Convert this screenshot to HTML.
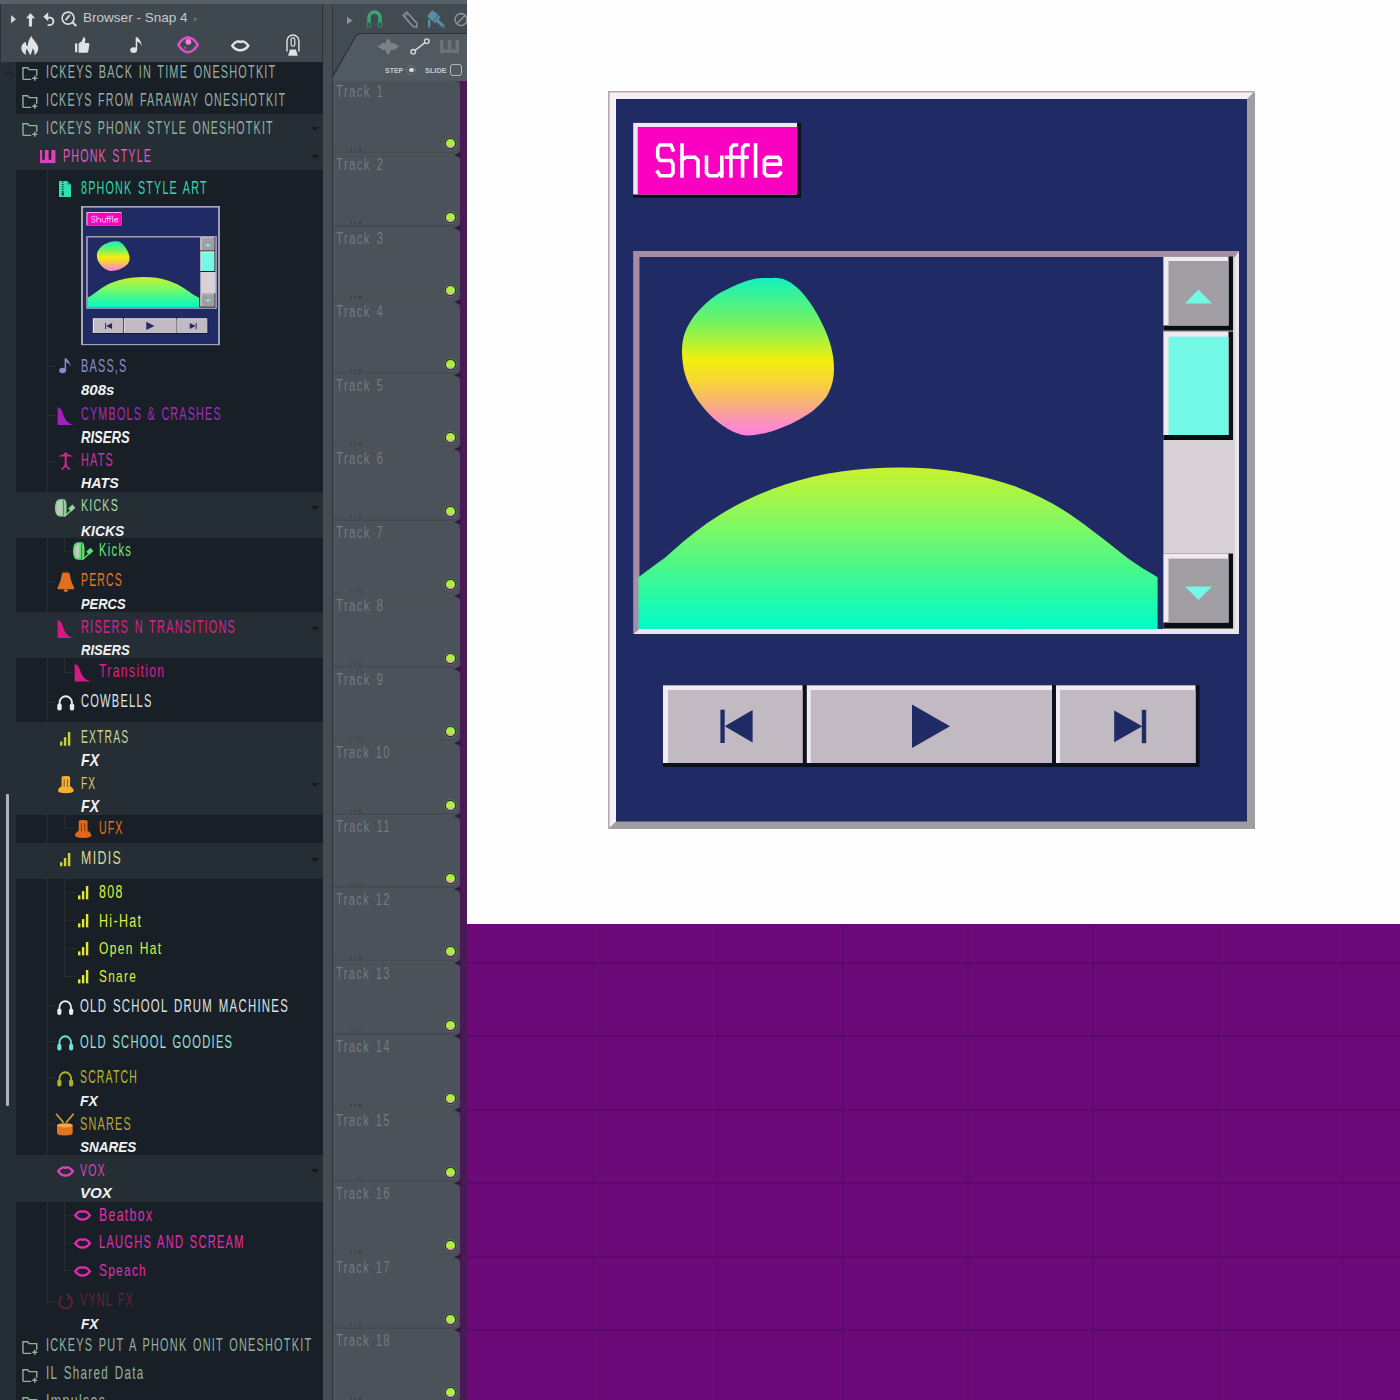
<!DOCTYPE html>
<html><head><meta charset="utf-8">
<style>
html,body{margin:0;padding:0;width:1400px;height:1400px;overflow:hidden;background:#fdfdfd;font-family:"Liberation Sans",sans-serif}
.r{position:absolute}
.t{position:absolute;white-space:nowrap;font-family:"Liberation Sans",sans-serif;transform-origin:0 0}
.trk{position:absolute;left:333px;width:127px;background:#4b5259;border-radius:0 7px 7px 0}
.dot{position:absolute;left:445px;width:9px;height:9px;border-radius:50%;background:linear-gradient(#a4ee3c 0,#b0f040 68%,#d8b898 76%,#d8b898 100%);border:1.5px solid #262c30;box-shadow:0 0 0 1px #5e656b;box-sizing:content-box}
.ic{position:absolute;overflow:visible}
.dd{position:absolute;left:311px;width:0;height:0;border-left:4px solid transparent;border-right:4px solid transparent;border-top:4px solid #15191d}
</style></head><body>
<svg width="0" height="0" style="position:absolute">
<defs>
<linearGradient id="gblob" x1="0" y1="0" x2="0" y2="1">
<stop offset="0" stop-color="#14f2bc"/><stop offset="0.28" stop-color="#72f262"/><stop offset="0.42" stop-color="#b8f232"/>
<stop offset="0.52" stop-color="#f0f00e"/><stop offset="0.66" stop-color="#f8d438"/><stop offset="0.8" stop-color="#f8b078"/>
<stop offset="0.9" stop-color="#fc94b8"/><stop offset="1" stop-color="#fc80e0"/>
</linearGradient>
<linearGradient id="ghill" x1="0" y1="0" x2="0" y2="1">
<stop offset="0" stop-color="#c8f22e"/><stop offset="0.3" stop-color="#8cf85a"/><stop offset="0.62" stop-color="#48f88a"/><stop offset="1" stop-color="#00fcc8"/>
</linearGradient>
<symbol id="art" viewBox="608 91 647 738" preserveAspectRatio="none">
<rect x="608" y="91" width="647" height="738" fill="#a09ea0"/>
<polygon points="608,91 1255,91 1247,99 616,99 616,821.5 608,829" fill="#f4f0f4"/><path d="M608.8,829 L608.8,91.8 L1254,91.8" fill="none" stroke="#b4a8b4" stroke-width="1.6"/>
<rect x="616" y="99" width="631" height="722.5" fill="#202b66"/>
<rect x="633.2" y="122.9" width="167.8" height="74.8" fill="#0a0e18"/>
<rect x="633.2" y="122.9" width="163.9" height="71.6" fill="#f0e8f0"/>
<rect x="637.7" y="127" width="159.4" height="67.5" fill="#fa00c0"/>
<g stroke="#ffffff" stroke-width="3.6" fill="none" stroke-linecap="square" stroke-linejoin="miter">
<path d="M673,150 L671,145 L660,145 L657.7,148 L657.7,157 L660,160.5 L671,160.5 L673,164 L673,173 L671,175.8 L660,175.8 L657.7,172"/>
<path d="M682,145 L682,176 M682,160 L686,157.3 L695,157.3 L698,160.5 L698,176"/>
<path d="M706.5,157.3 L706.5,173 L709,175.8 L717,175.8 L721.8,172 M721.8,157.3 L721.8,176"/>
<path d="M730.9,176 L730.9,148 L733.5,145 L736.5,145 M726.5,157.3 L735.5,157.3"/>
<path d="M742.6,176 L742.6,148 L745.2,145 L748,145 M738.5,157.3 L747,157.3"/>
<path d="M755.6,145 L755.6,176"/>
<path d="M780.3,173 L778,175.8 L767,175.8 L764.4,173 L764.4,160 L767,157.3 L778,157.3 L780.3,160 L780.3,164.3 L765,164.3"/>
</g>
<rect x="633.6" y="251" width="605.4" height="383" fill="#ece6ec"/>
<polygon points="633.6,251 1239,251 1235,257 639.3,257 639.3,629 633.6,634" fill="#a68ca4"/>
<rect x="639.3" y="257" width="595.7" height="372" fill="#202b66"/>
<path fill="url(#gblob)" d="M762.1,277.9 C752,278.5 745,281 737.1,284.6 C729,288.5 722,291.5 715.7,295.4 C708,301 703,306 697.9,311.4 C693,317 690,322 687.1,327.5 C684,334 682.6,340 682.1,347.1 C681.6,354 682.5,361 683.6,368.6 C685,376 687.5,382 690.7,388.2 C694.5,396 699.5,403 705,409.6 C710.5,416 716,421 722.9,425.7 C729.5,430 736.5,434 744.3,435.2 C751.5,436 758.5,434.6 765.7,432.9 C774.5,430.6 782.5,427.5 790.7,423.9 C798.5,420 805.5,416 812.1,411.4 C818,406.5 822.8,402 826.4,397.1 C830.5,390 832.8,383 833.6,375.7 C834.4,368.5 833.8,361 832.7,354.3 C831.5,347 829.3,340 826.4,332.9 C823.4,325.5 819.8,318.5 815.7,311.4 C811.3,304 806.6,297.5 801.4,291.8 C797,287 792.3,283.2 787.1,280.7 C782.5,278.6 777.5,277.7 772.9,277.9 Z"/>
<path fill="url(#ghill)" d="M638.5,577.3 C648,570 656,564 664.7,558 C678,546 692,534 707,523.3 C732,506 757,494 784.3,484.7 C822,472 860,467.4 900,467.4 C940,467.4 978,473 1015.7,486.6 C1044,497 1069,512 1092.8,531 C1105,540 1116,549 1127.5,558 C1137,565 1147,571 1157.6,577.3 L1157.6,629 L638.5,629 Z"/>
<rect x="1163.4" y="257" width="71.6" height="372" fill="#d8d2d8"/>
<rect x="1163.4" y="256.5" width="69.6" height="74.1" fill="#0a0e14"/>
<rect x="1163.4" y="256.5" width="65.1" height="69" fill="#f0eaf0"/>
<rect x="1168.5" y="261" width="60" height="64.5" fill="#a09ea2"/>
<polygon points="1185,303.6 1198.5,289.5 1212,303.6" fill="#72f8e4"/>
<rect x="1163.4" y="331.5" width="69.6" height="108.5" fill="#0a0e14"/>
<rect x="1163.4" y="331.5" width="65.1" height="103.5" fill="#f0eaf0"/>
<rect x="1168.5" y="336.6" width="60" height="98.4" fill="#72f8e4"/>
<rect x="1163.4" y="553.5" width="69.6" height="75" fill="#0a0e14"/>
<rect x="1163.4" y="553.5" width="65.1" height="69" fill="#f0eaf0"/>
<rect x="1168.5" y="558.6" width="60" height="63.9" fill="#a09ea2"/>
<polygon points="1185,586.5 1212,586.5 1198.5,600" fill="#72f8e4"/>
<rect x="663" y="685.3" width="393" height="81.7" fill="#0c1018"/>
<rect x="663" y="685.3" width="139.5" height="77.7" fill="#f2ecf2"/>
<rect x="668" y="690" width="134.5" height="73" fill="#c2bac2"/>
<rect x="806.8" y="685.3" width="245.2" height="77.7" fill="#f2ecf2"/>
<rect x="810.8" y="690" width="241.2" height="73" fill="#c2bac2"/>
<rect x="1056" y="685.3" width="143.6" height="81.7" fill="#0c1018"/>
<rect x="1056" y="685.3" width="139.5" height="77.7" fill="#f2ecf2"/>
<rect x="1060" y="690" width="135.5" height="73" fill="#c2bac2"/>
<rect x="720.4" y="709.7" width="4.3" height="33.3" fill="#202b66"/>
<polygon points="752.6,710 724.7,726.3 752.6,742.5" fill="#202b66"/>
<polygon points="912,704.4 950,726.2 912,748" fill="#202b66"/>
<polygon points="1114.2,710.4 1142.3,726.3 1114.2,742.2" fill="#202b66"/>
<rect x="1141.8" y="709.8" width="4.4" height="33.4" fill="#202b66"/>
</symbol>
</defs>
</svg>

<!-- left dark app area -->
<div class="r" style="left:0;top:0;width:467px;height:1400px;background:#262e35"></div>
<div class="r" style="left:0;top:0;width:467px;height:4px;background:#586067"></div>
<div class="r" style="left:0;top:4px;width:323px;height:58px;background:#3f474f"></div>
<div class="r" style="left:0;top:4px;width:1px;height:58px;background:#2a3036"></div>
<!-- gutter -->
<div class="r" style="left:322px;top:4px;width:11px;height:1396px;background:#454d54"></div>
<div class="r" style="left:322px;top:4px;width:1px;height:1396px;background:#2a3035"></div>
<div class="r" style="left:332px;top:4px;width:1px;height:1396px;background:#2f353a"></div>
<!-- track header -->
<div class="r" style="left:333px;top:4px;width:134px;height:77px;background:#434b52"></div>
<svg class="ic" style="left:333px;top:30px" width="134" height="52" viewBox="333 30 134 52">
<path d="M333,81 L333,76 L356,35.5 Q358,33.5 361,33.5 L467,33.5 L467,81 Z" fill="#525a61"/>
<path d="M333,76 L356,35.5 Q358,33.5 361,33.5 L467,33.5" fill="none" stroke="#2a3035" stroke-width="1.2"/>
</svg>
<!-- track column -->
<div class="r" style="left:333px;top:81px;width:127px;height:1319px;background:#3e454c"></div>
<div class="r" style="left:460px;top:81px;width:7px;height:1319px;background:#4a1a58"></div>
<div class="trk" style="top:81.20px;height:73.48px"></div>
<div class="dot" style="top:138.20px"></div>
<div class="r" style="left:350.5px;top:148.80px;width:1.8px;height:1.8px;background:#353b41"></div>
<div class="r" style="left:354.7px;top:148.80px;width:1.8px;height:1.8px;background:#353b41"></div>
<div class="r" style="left:358.9px;top:148.80px;width:1.8px;height:1.8px;background:#353b41"></div>
<div class="r" style="left:333px;top:150.68px;width:121px;height:4px;background:linear-gradient(rgba(40,46,52,0),rgba(40,46,52,.35))"></div>
<div class="t" style="left:336.00px;top:83.92px;font-size:16.86px;line-height:16.86px;letter-spacing:1.85px;word-spacing:2.02px;font-weight:400;font-style:normal;color:#737a81;transform:scaleX(0.6841);">Track 1</div>
<div class="trk" style="top:154.68px;height:73.48px"></div>
<div class="r" style="left:333px;top:153.18px;width:127px;height:1.5px;background:#4c5359"></div>
<div class="dot" style="top:211.68px"></div>
<div class="r" style="left:350.5px;top:222.28px;width:1.8px;height:1.8px;background:#353b41"></div>
<div class="r" style="left:354.7px;top:222.28px;width:1.8px;height:1.8px;background:#353b41"></div>
<div class="r" style="left:358.9px;top:222.28px;width:1.8px;height:1.8px;background:#353b41"></div>
<div class="r" style="left:333px;top:224.16px;width:121px;height:4px;background:linear-gradient(rgba(40,46,52,0),rgba(40,46,52,.35))"></div>
<div class="t" style="left:336.00px;top:157.40px;font-size:16.86px;line-height:16.86px;letter-spacing:1.85px;word-spacing:2.02px;font-weight:400;font-style:normal;color:#737a81;transform:scaleX(0.6841);">Track 2</div>
<div class="r" style="left:454px;top:151.68px;width:0;height:0;border-top:3px solid transparent;border-bottom:3px solid transparent;border-right:7px solid #3a1444"></div>
<div class="trk" style="top:228.16px;height:73.48px"></div>
<div class="r" style="left:333px;top:226.66px;width:127px;height:1.5px;background:#4c5359"></div>
<div class="dot" style="top:285.16px"></div>
<div class="r" style="left:350.5px;top:295.76px;width:1.8px;height:1.8px;background:#353b41"></div>
<div class="r" style="left:354.7px;top:295.76px;width:1.8px;height:1.8px;background:#353b41"></div>
<div class="r" style="left:358.9px;top:295.76px;width:1.8px;height:1.8px;background:#353b41"></div>
<div class="r" style="left:333px;top:297.64px;width:121px;height:4px;background:linear-gradient(rgba(40,46,52,0),rgba(40,46,52,.35))"></div>
<div class="t" style="left:336.00px;top:230.88px;font-size:16.86px;line-height:16.86px;letter-spacing:1.85px;word-spacing:2.02px;font-weight:400;font-style:normal;color:#737a81;transform:scaleX(0.6841);">Track 3</div>
<div class="r" style="left:454px;top:225.16px;width:0;height:0;border-top:3px solid transparent;border-bottom:3px solid transparent;border-right:7px solid #3a1444"></div>
<div class="trk" style="top:301.64px;height:73.48px"></div>
<div class="r" style="left:333px;top:300.14px;width:127px;height:1.5px;background:#4c5359"></div>
<div class="dot" style="top:358.64px"></div>
<div class="r" style="left:350.5px;top:369.24px;width:1.8px;height:1.8px;background:#353b41"></div>
<div class="r" style="left:354.7px;top:369.24px;width:1.8px;height:1.8px;background:#353b41"></div>
<div class="r" style="left:358.9px;top:369.24px;width:1.8px;height:1.8px;background:#353b41"></div>
<div class="r" style="left:333px;top:371.12px;width:121px;height:4px;background:linear-gradient(rgba(40,46,52,0),rgba(40,46,52,.35))"></div>
<div class="t" style="left:336.00px;top:304.36px;font-size:16.86px;line-height:16.86px;letter-spacing:1.85px;word-spacing:2.02px;font-weight:400;font-style:normal;color:#737a81;transform:scaleX(0.6841);">Track 4</div>
<div class="r" style="left:454px;top:298.64px;width:0;height:0;border-top:3px solid transparent;border-bottom:3px solid transparent;border-right:7px solid #3a1444"></div>
<div class="trk" style="top:375.12px;height:73.48px"></div>
<div class="r" style="left:333px;top:373.62px;width:127px;height:1.5px;background:#4c5359"></div>
<div class="dot" style="top:432.12px"></div>
<div class="r" style="left:350.5px;top:442.72px;width:1.8px;height:1.8px;background:#353b41"></div>
<div class="r" style="left:354.7px;top:442.72px;width:1.8px;height:1.8px;background:#353b41"></div>
<div class="r" style="left:358.9px;top:442.72px;width:1.8px;height:1.8px;background:#353b41"></div>
<div class="r" style="left:333px;top:444.60px;width:121px;height:4px;background:linear-gradient(rgba(40,46,52,0),rgba(40,46,52,.35))"></div>
<div class="t" style="left:336.00px;top:377.84px;font-size:16.86px;line-height:16.86px;letter-spacing:1.85px;word-spacing:2.02px;font-weight:400;font-style:normal;color:#737a81;transform:scaleX(0.6841);">Track 5</div>
<div class="r" style="left:454px;top:372.12px;width:0;height:0;border-top:3px solid transparent;border-bottom:3px solid transparent;border-right:7px solid #3a1444"></div>
<div class="trk" style="top:448.60px;height:73.48px"></div>
<div class="r" style="left:333px;top:447.10px;width:127px;height:1.5px;background:#4c5359"></div>
<div class="dot" style="top:505.60px"></div>
<div class="r" style="left:350.5px;top:516.20px;width:1.8px;height:1.8px;background:#353b41"></div>
<div class="r" style="left:354.7px;top:516.20px;width:1.8px;height:1.8px;background:#353b41"></div>
<div class="r" style="left:358.9px;top:516.20px;width:1.8px;height:1.8px;background:#353b41"></div>
<div class="r" style="left:333px;top:518.08px;width:121px;height:4px;background:linear-gradient(rgba(40,46,52,0),rgba(40,46,52,.35))"></div>
<div class="t" style="left:336.00px;top:451.32px;font-size:16.86px;line-height:16.86px;letter-spacing:1.85px;word-spacing:2.02px;font-weight:400;font-style:normal;color:#737a81;transform:scaleX(0.6841);">Track 6</div>
<div class="r" style="left:454px;top:445.60px;width:0;height:0;border-top:3px solid transparent;border-bottom:3px solid transparent;border-right:7px solid #3a1444"></div>
<div class="trk" style="top:522.08px;height:73.48px"></div>
<div class="r" style="left:333px;top:520.58px;width:127px;height:1.5px;background:#4c5359"></div>
<div class="dot" style="top:579.08px"></div>
<div class="r" style="left:350.5px;top:589.68px;width:1.8px;height:1.8px;background:#353b41"></div>
<div class="r" style="left:354.7px;top:589.68px;width:1.8px;height:1.8px;background:#353b41"></div>
<div class="r" style="left:358.9px;top:589.68px;width:1.8px;height:1.8px;background:#353b41"></div>
<div class="r" style="left:333px;top:591.56px;width:121px;height:4px;background:linear-gradient(rgba(40,46,52,0),rgba(40,46,52,.35))"></div>
<div class="t" style="left:336.00px;top:524.80px;font-size:16.86px;line-height:16.86px;letter-spacing:1.85px;word-spacing:2.02px;font-weight:400;font-style:normal;color:#737a81;transform:scaleX(0.6841);">Track 7</div>
<div class="r" style="left:454px;top:519.08px;width:0;height:0;border-top:3px solid transparent;border-bottom:3px solid transparent;border-right:7px solid #3a1444"></div>
<div class="trk" style="top:595.56px;height:73.48px"></div>
<div class="r" style="left:333px;top:594.06px;width:127px;height:1.5px;background:#4c5359"></div>
<div class="dot" style="top:652.56px"></div>
<div class="r" style="left:350.5px;top:663.16px;width:1.8px;height:1.8px;background:#353b41"></div>
<div class="r" style="left:354.7px;top:663.16px;width:1.8px;height:1.8px;background:#353b41"></div>
<div class="r" style="left:358.9px;top:663.16px;width:1.8px;height:1.8px;background:#353b41"></div>
<div class="r" style="left:333px;top:665.04px;width:121px;height:4px;background:linear-gradient(rgba(40,46,52,0),rgba(40,46,52,.35))"></div>
<div class="t" style="left:336.00px;top:598.28px;font-size:16.86px;line-height:16.86px;letter-spacing:1.85px;word-spacing:2.02px;font-weight:400;font-style:normal;color:#737a81;transform:scaleX(0.6841);">Track 8</div>
<div class="r" style="left:454px;top:592.56px;width:0;height:0;border-top:3px solid transparent;border-bottom:3px solid transparent;border-right:7px solid #3a1444"></div>
<div class="trk" style="top:669.04px;height:73.48px"></div>
<div class="r" style="left:333px;top:667.54px;width:127px;height:1.5px;background:#4c5359"></div>
<div class="dot" style="top:726.04px"></div>
<div class="r" style="left:350.5px;top:736.64px;width:1.8px;height:1.8px;background:#353b41"></div>
<div class="r" style="left:354.7px;top:736.64px;width:1.8px;height:1.8px;background:#353b41"></div>
<div class="r" style="left:358.9px;top:736.64px;width:1.8px;height:1.8px;background:#353b41"></div>
<div class="r" style="left:333px;top:738.52px;width:121px;height:4px;background:linear-gradient(rgba(40,46,52,0),rgba(40,46,52,.35))"></div>
<div class="t" style="left:336.00px;top:671.76px;font-size:16.86px;line-height:16.86px;letter-spacing:1.85px;word-spacing:2.02px;font-weight:400;font-style:normal;color:#737a81;transform:scaleX(0.6841);">Track 9</div>
<div class="r" style="left:454px;top:666.04px;width:0;height:0;border-top:3px solid transparent;border-bottom:3px solid transparent;border-right:7px solid #3a1444"></div>
<div class="trk" style="top:742.52px;height:73.48px"></div>
<div class="r" style="left:333px;top:741.02px;width:127px;height:1.5px;background:#4c5359"></div>
<div class="dot" style="top:799.52px"></div>
<div class="r" style="left:350.5px;top:810.12px;width:1.8px;height:1.8px;background:#353b41"></div>
<div class="r" style="left:354.7px;top:810.12px;width:1.8px;height:1.8px;background:#353b41"></div>
<div class="r" style="left:358.9px;top:810.12px;width:1.8px;height:1.8px;background:#353b41"></div>
<div class="r" style="left:333px;top:812.00px;width:121px;height:4px;background:linear-gradient(rgba(40,46,52,0),rgba(40,46,52,.35))"></div>
<div class="t" style="left:336.00px;top:745.24px;font-size:16.86px;line-height:16.86px;letter-spacing:1.85px;word-spacing:2.02px;font-weight:400;font-style:normal;color:#737a81;transform:scaleX(0.6712);">Track 10</div>
<div class="r" style="left:454px;top:739.52px;width:0;height:0;border-top:3px solid transparent;border-bottom:3px solid transparent;border-right:7px solid #3a1444"></div>
<div class="trk" style="top:816.00px;height:73.48px"></div>
<div class="r" style="left:333px;top:814.50px;width:127px;height:1.5px;background:#4c5359"></div>
<div class="dot" style="top:873.00px"></div>
<div class="r" style="left:350.5px;top:883.60px;width:1.8px;height:1.8px;background:#353b41"></div>
<div class="r" style="left:354.7px;top:883.60px;width:1.8px;height:1.8px;background:#353b41"></div>
<div class="r" style="left:358.9px;top:883.60px;width:1.8px;height:1.8px;background:#353b41"></div>
<div class="r" style="left:333px;top:885.48px;width:121px;height:4px;background:linear-gradient(rgba(40,46,52,0),rgba(40,46,52,.35))"></div>
<div class="t" style="left:336.00px;top:818.72px;font-size:16.86px;line-height:16.86px;letter-spacing:1.85px;word-spacing:2.02px;font-weight:400;font-style:normal;color:#737a81;transform:scaleX(0.6820);">Track 11</div>
<div class="r" style="left:454px;top:813.00px;width:0;height:0;border-top:3px solid transparent;border-bottom:3px solid transparent;border-right:7px solid #3a1444"></div>
<div class="trk" style="top:889.48px;height:73.48px"></div>
<div class="r" style="left:333px;top:887.98px;width:127px;height:1.5px;background:#4c5359"></div>
<div class="dot" style="top:946.48px"></div>
<div class="r" style="left:350.5px;top:957.08px;width:1.8px;height:1.8px;background:#353b41"></div>
<div class="r" style="left:354.7px;top:957.08px;width:1.8px;height:1.8px;background:#353b41"></div>
<div class="r" style="left:358.9px;top:957.08px;width:1.8px;height:1.8px;background:#353b41"></div>
<div class="r" style="left:333px;top:958.96px;width:121px;height:4px;background:linear-gradient(rgba(40,46,52,0),rgba(40,46,52,.35))"></div>
<div class="t" style="left:336.00px;top:892.20px;font-size:16.86px;line-height:16.86px;letter-spacing:1.85px;word-spacing:2.02px;font-weight:400;font-style:normal;color:#737a81;transform:scaleX(0.6712);">Track 12</div>
<div class="r" style="left:454px;top:886.48px;width:0;height:0;border-top:3px solid transparent;border-bottom:3px solid transparent;border-right:7px solid #3a1444"></div>
<div class="trk" style="top:962.96px;height:73.48px"></div>
<div class="r" style="left:333px;top:961.46px;width:127px;height:1.5px;background:#4c5359"></div>
<div class="dot" style="top:1019.96px"></div>
<div class="r" style="left:350.5px;top:1030.56px;width:1.8px;height:1.8px;background:#353b41"></div>
<div class="r" style="left:354.7px;top:1030.56px;width:1.8px;height:1.8px;background:#353b41"></div>
<div class="r" style="left:358.9px;top:1030.56px;width:1.8px;height:1.8px;background:#353b41"></div>
<div class="r" style="left:333px;top:1032.44px;width:121px;height:4px;background:linear-gradient(rgba(40,46,52,0),rgba(40,46,52,.35))"></div>
<div class="t" style="left:336.00px;top:965.68px;font-size:16.86px;line-height:16.86px;letter-spacing:1.85px;word-spacing:2.02px;font-weight:400;font-style:normal;color:#737a81;transform:scaleX(0.6712);">Track 13</div>
<div class="r" style="left:454px;top:959.96px;width:0;height:0;border-top:3px solid transparent;border-bottom:3px solid transparent;border-right:7px solid #3a1444"></div>
<div class="trk" style="top:1036.44px;height:73.48px"></div>
<div class="r" style="left:333px;top:1034.94px;width:127px;height:1.5px;background:#4c5359"></div>
<div class="dot" style="top:1093.44px"></div>
<div class="r" style="left:350.5px;top:1104.04px;width:1.8px;height:1.8px;background:#353b41"></div>
<div class="r" style="left:354.7px;top:1104.04px;width:1.8px;height:1.8px;background:#353b41"></div>
<div class="r" style="left:358.9px;top:1104.04px;width:1.8px;height:1.8px;background:#353b41"></div>
<div class="r" style="left:333px;top:1105.92px;width:121px;height:4px;background:linear-gradient(rgba(40,46,52,0),rgba(40,46,52,.35))"></div>
<div class="t" style="left:336.00px;top:1039.16px;font-size:16.86px;line-height:16.86px;letter-spacing:1.85px;word-spacing:2.02px;font-weight:400;font-style:normal;color:#737a81;transform:scaleX(0.6712);">Track 14</div>
<div class="r" style="left:454px;top:1033.44px;width:0;height:0;border-top:3px solid transparent;border-bottom:3px solid transparent;border-right:7px solid #3a1444"></div>
<div class="trk" style="top:1109.92px;height:73.48px"></div>
<div class="r" style="left:333px;top:1108.42px;width:127px;height:1.5px;background:#4c5359"></div>
<div class="dot" style="top:1166.92px"></div>
<div class="r" style="left:350.5px;top:1177.52px;width:1.8px;height:1.8px;background:#353b41"></div>
<div class="r" style="left:354.7px;top:1177.52px;width:1.8px;height:1.8px;background:#353b41"></div>
<div class="r" style="left:358.9px;top:1177.52px;width:1.8px;height:1.8px;background:#353b41"></div>
<div class="r" style="left:333px;top:1179.40px;width:121px;height:4px;background:linear-gradient(rgba(40,46,52,0),rgba(40,46,52,.35))"></div>
<div class="t" style="left:336.00px;top:1112.64px;font-size:16.86px;line-height:16.86px;letter-spacing:1.85px;word-spacing:2.02px;font-weight:400;font-style:normal;color:#737a81;transform:scaleX(0.6712);">Track 15</div>
<div class="r" style="left:454px;top:1106.92px;width:0;height:0;border-top:3px solid transparent;border-bottom:3px solid transparent;border-right:7px solid #3a1444"></div>
<div class="trk" style="top:1183.40px;height:73.48px"></div>
<div class="r" style="left:333px;top:1181.90px;width:127px;height:1.5px;background:#4c5359"></div>
<div class="dot" style="top:1240.40px"></div>
<div class="r" style="left:350.5px;top:1251.00px;width:1.8px;height:1.8px;background:#353b41"></div>
<div class="r" style="left:354.7px;top:1251.00px;width:1.8px;height:1.8px;background:#353b41"></div>
<div class="r" style="left:358.9px;top:1251.00px;width:1.8px;height:1.8px;background:#353b41"></div>
<div class="r" style="left:333px;top:1252.88px;width:121px;height:4px;background:linear-gradient(rgba(40,46,52,0),rgba(40,46,52,.35))"></div>
<div class="t" style="left:336.00px;top:1186.12px;font-size:16.86px;line-height:16.86px;letter-spacing:1.85px;word-spacing:2.02px;font-weight:400;font-style:normal;color:#737a81;transform:scaleX(0.6712);">Track 16</div>
<div class="r" style="left:454px;top:1180.40px;width:0;height:0;border-top:3px solid transparent;border-bottom:3px solid transparent;border-right:7px solid #3a1444"></div>
<div class="trk" style="top:1256.88px;height:73.48px"></div>
<div class="r" style="left:333px;top:1255.38px;width:127px;height:1.5px;background:#4c5359"></div>
<div class="dot" style="top:1313.88px"></div>
<div class="r" style="left:350.5px;top:1324.48px;width:1.8px;height:1.8px;background:#353b41"></div>
<div class="r" style="left:354.7px;top:1324.48px;width:1.8px;height:1.8px;background:#353b41"></div>
<div class="r" style="left:358.9px;top:1324.48px;width:1.8px;height:1.8px;background:#353b41"></div>
<div class="r" style="left:333px;top:1326.36px;width:121px;height:4px;background:linear-gradient(rgba(40,46,52,0),rgba(40,46,52,.35))"></div>
<div class="t" style="left:336.00px;top:1259.60px;font-size:16.86px;line-height:16.86px;letter-spacing:1.85px;word-spacing:2.02px;font-weight:400;font-style:normal;color:#737a81;transform:scaleX(0.6712);">Track 17</div>
<div class="r" style="left:454px;top:1253.88px;width:0;height:0;border-top:3px solid transparent;border-bottom:3px solid transparent;border-right:7px solid #3a1444"></div>
<div class="trk" style="top:1330.36px;height:73.48px"></div>
<div class="r" style="left:333px;top:1328.86px;width:127px;height:1.5px;background:#4c5359"></div>
<div class="dot" style="top:1387.36px"></div>
<div class="r" style="left:350.5px;top:1397.96px;width:1.8px;height:1.8px;background:#353b41"></div>
<div class="r" style="left:354.7px;top:1397.96px;width:1.8px;height:1.8px;background:#353b41"></div>
<div class="r" style="left:358.9px;top:1397.96px;width:1.8px;height:1.8px;background:#353b41"></div>
<div class="r" style="left:333px;top:1399.84px;width:121px;height:4px;background:linear-gradient(rgba(40,46,52,0),rgba(40,46,52,.35))"></div>
<div class="t" style="left:336.00px;top:1333.08px;font-size:16.86px;line-height:16.86px;letter-spacing:1.85px;word-spacing:2.02px;font-weight:400;font-style:normal;color:#737a81;transform:scaleX(0.6712);">Track 18</div>
<div class="r" style="left:454px;top:1327.36px;width:0;height:0;border-top:3px solid transparent;border-bottom:3px solid transparent;border-right:7px solid #3a1444"></div>
<!-- white area -->
<div class="r" style="left:467px;top:0;width:933px;height:923.6px;background:#fdfdfd"></div>
<div class="r" style="left:467px;top:923.6px;width:933px;height:476.4px;background:#6c0a7a"></div>
<div class="r" style="left:467px;top:961.96px;width:933px;height:2px;background:#5c0a6a"></div>
<div class="r" style="left:467px;top:1035.44px;width:933px;height:2px;background:#5c0a6a"></div>
<div class="r" style="left:467px;top:1108.92px;width:933px;height:2px;background:#5c0a6a"></div>
<div class="r" style="left:467px;top:1182.40px;width:933px;height:2px;background:#5c0a6a"></div>
<div class="r" style="left:467px;top:1255.88px;width:933px;height:2px;background:#5c0a6a"></div>
<div class="r" style="left:467px;top:1329.36px;width:933px;height:2px;background:#5c0a6a"></div>
<div class="r" style="left:467px;top:1402.84px;width:933px;height:2px;background:#5c0a6a"></div>
<div class="r" style="left:591.80px;top:923.6px;width:1.5px;height:477px;background:#600a6e"></div>
<div class="r" style="left:716.95px;top:923.6px;width:1.5px;height:477px;background:#600a6e"></div>
<div class="r" style="left:842.10px;top:923.6px;width:1.5px;height:477px;background:#600a6e"></div>
<div class="r" style="left:967.25px;top:923.6px;width:1.5px;height:477px;background:#600a6e"></div>
<div class="r" style="left:1092.40px;top:923.6px;width:1.5px;height:477px;background:#600a6e"></div>
<div class="r" style="left:1217.55px;top:923.6px;width:1.5px;height:477px;background:#600a6e"></div>
<div class="r" style="left:1342.70px;top:923.6px;width:1.5px;height:477px;background:#600a6e"></div>
<svg class="ic" style="left:608px;top:91px" width="647" height="738"><use href="#art" x="0" y="0" width="647" height="738"/></svg>

<!-- browser tree -->
<div class="r" style="left:16px;top:62px;width:307px;height:52px;background:#181f27"></div>
<div class="r" style="left:16px;top:170px;width:307px;height:322px;background:#181f27"></div>
<div class="r" style="left:16px;top:538px;width:307px;height:74px;background:#181f27"></div>
<div class="r" style="left:16px;top:658px;width:307px;height:64px;background:#181f27"></div>
<div class="r" style="left:16px;top:815px;width:307px;height:28px;background:#181f27"></div>
<div class="r" style="left:16px;top:879px;width:307px;height:276px;background:#181f27"></div>
<div class="r" style="left:16px;top:1202px;width:307px;height:198px;background:#181f27"></div>
<div class="r" style="left:6px;top:794px;width:3.4px;height:312px;background:#b0b2bc;border-radius:1px"></div>
<svg class="ic" style="left:80.7px;top:206px" width="139" height="139.4"><use href="#art" x="0" y="0" width="139" height="139.4"/></svg>
<div class="r" style="left:80.7px;top:206px;width:136.6px;height:137px;border:1.2px solid #9ca2c4;opacity:.9"></div>
<div class="t" style="left:45.70px;top:62.92px;font-size:18.75px;line-height:18.75px;letter-spacing:2.06px;word-spacing:2.25px;font-weight:400;font-style:normal;color:#96b0a0;transform:scaleX(0.5811);">ICKEYS BACK IN TIME ONESHOTKIT</div>
<div class="t" style="left:45.70px;top:91.29px;font-size:18.31px;line-height:18.31px;letter-spacing:2.01px;word-spacing:2.20px;font-weight:400;font-style:normal;color:#96b0a0;transform:scaleX(0.5880);">ICKEYS FROM FARAWAY ONESHOTKIT</div>
<div class="t" style="left:45.70px;top:118.92px;font-size:18.75px;line-height:18.75px;letter-spacing:2.06px;word-spacing:2.25px;font-weight:400;font-style:normal;color:#96b0a0;transform:scaleX(0.5710);">ICKEYS PHONK STYLE ONESHOTKIT</div>
<div class="t" style="left:63.40px;top:146.92px;font-size:18.75px;line-height:18.75px;letter-spacing:2.06px;word-spacing:2.25px;font-weight:400;font-style:normal;color:#dc5cbc;transform:scaleX(0.5703);">PHONK STYLE</div>
<div class="t" style="left:80.60px;top:179.29px;font-size:18.31px;line-height:18.31px;letter-spacing:2.01px;word-spacing:2.20px;font-weight:400;font-style:normal;color:#34d8aa;transform:scaleX(0.5889);">8PHONK STYLE ART</div>
<div class="t" style="left:80.60px;top:357.73px;font-size:17.44px;line-height:17.44px;letter-spacing:1.92px;word-spacing:2.09px;font-weight:400;font-style:normal;color:#8c8cd4;transform:scaleX(0.6249);">BASS,S</div>
<div class="t" style="left:80.60px;top:383.35px;font-size:14.83px;line-height:14.83px;letter-spacing:0.00px;word-spacing:0.00px;font-weight:700;font-style:italic;color:#f2f2f2;transform:scaleX(1.0125);">808s</div>
<div class="t" style="left:80.60px;top:405.73px;font-size:17.44px;line-height:17.44px;letter-spacing:1.92px;word-spacing:2.09px;font-weight:400;font-style:normal;color:#a42cc0;transform:scaleX(0.6185);">CYMBOLS &amp; CRASHES</div>
<div class="t" style="left:80.60px;top:429.02px;font-size:16.28px;line-height:16.28px;letter-spacing:0.00px;word-spacing:0.00px;font-weight:700;font-style:italic;color:#f2f2f2;transform:scaleX(0.8047);">RISERS</div>
<div class="t" style="left:80.60px;top:452.03px;font-size:17.44px;line-height:17.44px;letter-spacing:1.92px;word-spacing:2.09px;font-weight:400;font-style:normal;color:#d8309c;transform:scaleX(0.6213);">HATS</div>
<div class="t" style="left:80.60px;top:476.42px;font-size:14.97px;line-height:14.97px;letter-spacing:0.00px;word-spacing:0.00px;font-weight:700;font-style:italic;color:#f2f2f2;transform:scaleX(0.9503);">HATS</div>
<div class="t" style="left:80.60px;top:498.22px;font-size:16.86px;line-height:16.86px;letter-spacing:1.85px;word-spacing:2.02px;font-weight:400;font-style:normal;color:#a8d8a0;transform:scaleX(0.6345);">KICKS</div>
<div class="t" style="left:80.60px;top:522.50px;font-size:15.12px;line-height:15.12px;letter-spacing:0.00px;word-spacing:0.00px;font-weight:700;font-style:italic;color:#f2f2f2;transform:scaleX(0.9189);">KICKS</div>
<div class="t" style="left:98.60px;top:542.11px;font-size:17.59px;line-height:17.59px;letter-spacing:1.93px;word-spacing:2.11px;font-weight:400;font-style:normal;color:#6ce47a;transform:scaleX(0.6429);">Kicks</div>
<div class="t" style="left:80.60px;top:571.86px;font-size:17.88px;line-height:17.88px;letter-spacing:1.97px;word-spacing:2.15px;font-weight:400;font-style:normal;color:#e8782a;transform:scaleX(0.5874);">PERCS</div>
<div class="t" style="left:80.60px;top:596.62px;font-size:14.97px;line-height:14.97px;letter-spacing:0.00px;word-spacing:0.00px;font-weight:700;font-style:italic;color:#f2f2f2;transform:scaleX(0.8628);">PERCS</div>
<div class="t" style="left:80.60px;top:618.53px;font-size:17.44px;line-height:17.44px;letter-spacing:1.92px;word-spacing:2.09px;font-weight:400;font-style:normal;color:#dc2090;transform:scaleX(0.6287);">RISERS N TRANSITIONS</div>
<div class="t" style="left:80.60px;top:642.92px;font-size:14.97px;line-height:14.97px;letter-spacing:0.00px;word-spacing:0.00px;font-weight:700;font-style:italic;color:#f2f2f2;transform:scaleX(0.8751);">RISERS</div>
<div class="t" style="left:98.60px;top:663.13px;font-size:17.44px;line-height:17.44px;letter-spacing:1.92px;word-spacing:2.09px;font-weight:400;font-style:normal;color:#dc2090;transform:scaleX(0.6983);">Transition</div>
<div class="t" style="left:80.60px;top:692.02px;font-size:18.75px;line-height:18.75px;letter-spacing:2.06px;word-spacing:2.25px;font-weight:400;font-style:normal;color:#dfe3e6;transform:scaleX(0.5928);">COWBELLS</div>
<div class="t" style="left:80.60px;top:728.02px;font-size:18.75px;line-height:18.75px;letter-spacing:2.06px;word-spacing:2.25px;font-weight:400;font-style:normal;color:#c8d890;transform:scaleX(0.5521);">EXTRAS</div>
<div class="t" style="left:80.60px;top:752.91px;font-size:15.70px;line-height:15.70px;letter-spacing:0.00px;word-spacing:0.00px;font-weight:700;font-style:italic;color:#f2f2f2;transform:scaleX(0.9005);">FX</div>
<div class="t" style="left:80.60px;top:776.05px;font-size:16.72px;line-height:16.72px;letter-spacing:1.84px;word-spacing:2.01px;font-weight:400;font-style:normal;color:#e0c860;transform:scaleX(0.6026);">FX</div>
<div class="t" style="left:80.60px;top:799.01px;font-size:15.70px;line-height:15.70px;letter-spacing:0.00px;word-spacing:0.00px;font-weight:700;font-style:italic;color:#f2f2f2;transform:scaleX(0.9005);">FX</div>
<div class="t" style="left:98.60px;top:819.83px;font-size:17.44px;line-height:17.44px;letter-spacing:1.92px;word-spacing:2.09px;font-weight:400;font-style:normal;color:#e87020;transform:scaleX(0.6043);">UFX</div>
<div class="t" style="left:80.60px;top:849.83px;font-size:17.44px;line-height:17.44px;letter-spacing:1.92px;word-spacing:2.09px;font-weight:400;font-style:normal;color:#d8dc98;transform:scaleX(0.7086);">MIDIS</div>
<div class="t" style="left:98.60px;top:884.13px;font-size:17.44px;line-height:17.44px;letter-spacing:1.92px;word-spacing:2.09px;font-weight:400;font-style:normal;color:#dcf040;transform:scaleX(0.7098);">808</div>
<div class="t" style="left:98.60px;top:911.82px;font-size:18.17px;line-height:18.17px;letter-spacing:2.00px;word-spacing:2.18px;font-weight:400;font-style:normal;color:#dcf040;transform:scaleX(0.6829);">Hi-Hat</div>
<div class="t" style="left:98.60px;top:939.98px;font-size:17.15px;line-height:17.15px;letter-spacing:1.89px;word-spacing:2.06px;font-weight:400;font-style:normal;color:#dcf040;transform:scaleX(0.7003);">Open Hat</div>
<div class="t" style="left:98.60px;top:968.48px;font-size:17.15px;line-height:17.15px;letter-spacing:1.89px;word-spacing:2.06px;font-weight:400;font-style:normal;color:#dcf040;transform:scaleX(0.6899);">Snare</div>
<div class="t" style="left:80.40px;top:996.55px;font-size:18.60px;line-height:18.60px;letter-spacing:2.05px;word-spacing:2.23px;font-weight:400;font-style:normal;color:#dfe3e6;transform:scaleX(0.6122);">OLD SCHOOL DRUM MACHINES</div>
<div class="t" style="left:80.40px;top:1032.55px;font-size:18.60px;line-height:18.60px;letter-spacing:2.05px;word-spacing:2.23px;font-weight:400;font-style:normal;color:#98e0d6;transform:scaleX(0.6022);">OLD SCHOOL GOODIES</div>
<div class="t" style="left:80.40px;top:1068.22px;font-size:18.75px;line-height:18.75px;letter-spacing:2.06px;word-spacing:2.25px;font-weight:400;font-style:normal;color:#b8b838;transform:scaleX(0.5579);">SCRATCH</div>
<div class="t" style="left:80.40px;top:1094.02px;font-size:14.39px;line-height:14.39px;letter-spacing:0.00px;word-spacing:0.00px;font-weight:700;font-style:italic;color:#f2f2f2;transform:scaleX(0.9719);">FX</div>
<div class="t" style="left:80.40px;top:1115.12px;font-size:18.17px;line-height:18.17px;letter-spacing:2.00px;word-spacing:2.18px;font-weight:400;font-style:normal;color:#b8a830;transform:scaleX(0.5982);">SNARES</div>
<div class="t" style="left:80.40px;top:1139.62px;font-size:14.97px;line-height:14.97px;letter-spacing:0.00px;word-spacing:0.00px;font-weight:700;font-style:italic;color:#f2f2f2;transform:scaleX(0.9018);">SNARES</div>
<div class="t" style="left:80.40px;top:1162.10px;font-size:17.01px;line-height:17.01px;letter-spacing:1.87px;word-spacing:2.04px;font-weight:400;font-style:normal;color:#d848b8;transform:scaleX(0.6208);">VOX</div>
<div class="t" style="left:80.40px;top:1185.97px;font-size:14.68px;line-height:14.68px;letter-spacing:0.00px;word-spacing:0.00px;font-weight:700;font-style:italic;color:#f2f2f2;transform:scaleX(1.0288);">VOX</div>
<div class="t" style="left:98.60px;top:1206.24px;font-size:18.02px;line-height:18.02px;letter-spacing:1.98px;word-spacing:2.16px;font-weight:400;font-style:normal;color:#e42cb0;transform:scaleX(0.6804);">Beatbox</div>
<div class="t" style="left:98.60px;top:1234.06px;font-size:17.88px;line-height:17.88px;letter-spacing:1.97px;word-spacing:2.15px;font-weight:400;font-style:normal;color:#e42cb0;transform:scaleX(0.6219);">LAUGHS AND SCREAM</div>
<div class="t" style="left:98.60px;top:1262.08px;font-size:17.15px;line-height:17.15px;letter-spacing:1.89px;word-spacing:2.06px;font-weight:400;font-style:normal;color:#e42cb0;transform:scaleX(0.6911);">Speach</div>
<div class="t" style="left:80.10px;top:1291.02px;font-size:18.17px;line-height:18.17px;letter-spacing:2.00px;word-spacing:2.18px;font-weight:400;font-style:normal;color:#64223a;transform:scaleX(0.5952);">VYNL FX</div>
<div class="t" style="left:81.30px;top:1316.16px;font-size:15.41px;line-height:15.41px;letter-spacing:0.00px;word-spacing:0.00px;font-weight:700;font-style:italic;color:#f2f2f2;transform:scaleX(0.8882);">FX</div>
<div class="t" style="left:46.00px;top:1335.72px;font-size:18.75px;line-height:18.75px;letter-spacing:2.06px;word-spacing:2.25px;font-weight:400;font-style:normal;color:#96b0a0;transform:scaleX(0.5831);">ICKEYS PUT A PHONK ONIT ONESHOTKIT</div>
<div class="t" style="left:46.00px;top:1364.02px;font-size:18.17px;line-height:18.17px;letter-spacing:2.00px;word-spacing:2.18px;font-weight:400;font-style:normal;color:#96b0a0;transform:scaleX(0.6402);">IL Shared Data</div>
<div class="t" style="left:46.00px;top:1392.27px;font-size:18.46px;line-height:18.46px;letter-spacing:2.03px;word-spacing:2.22px;font-weight:400;font-style:normal;color:#96b0a0;transform:scaleX(0.6701);">Impulses</div>
<svg class="ic" style="left:22.00px;top:66.00px;color:#96b0a0;" width="15.70" height="14.70" viewBox="0 0 16 15" preserveAspectRatio="none"><path d="M1 13.6V1.8h4.8l1.6 1.9H15v6.3M1 13.6h8.4" fill="none" stroke="currentColor" stroke-width="1.4"/><path d="M10.4 12.6h5.2M13 10v5" stroke="currentColor" stroke-width="1.5" fill="none"/></svg>
<svg class="ic" style="left:22.00px;top:94.00px;color:#96b0a0;" width="15.70" height="14.70" viewBox="0 0 16 15" preserveAspectRatio="none"><path d="M1 13.6V1.8h4.8l1.6 1.9H15v6.3M1 13.6h8.4" fill="none" stroke="currentColor" stroke-width="1.4"/><path d="M10.4 12.6h5.2M13 10v5" stroke="currentColor" stroke-width="1.5" fill="none"/></svg>
<svg class="ic" style="left:22.00px;top:122.00px;color:#96b0a0;" width="15.70" height="14.70" viewBox="0 0 16 15" preserveAspectRatio="none"><path d="M1 13.6V1.8h4.8l1.6 1.9H15v6.3M1 13.6h8.4" fill="none" stroke="currentColor" stroke-width="1.4"/><path d="M10.4 12.6h5.2M13 10v5" stroke="currentColor" stroke-width="1.5" fill="none"/></svg>
<svg class="ic" style="left:22.00px;top:1340.00px;color:#96b0a0;" width="15.70" height="14.70" viewBox="0 0 16 15" preserveAspectRatio="none"><path d="M1 13.6V1.8h4.8l1.6 1.9H15v6.3M1 13.6h8.4" fill="none" stroke="currentColor" stroke-width="1.4"/><path d="M10.4 12.6h5.2M13 10v5" stroke="currentColor" stroke-width="1.5" fill="none"/></svg>
<svg class="ic" style="left:22.00px;top:1368.00px;color:#96b0a0;" width="15.70" height="14.70" viewBox="0 0 16 15" preserveAspectRatio="none"><path d="M1 13.6V1.8h4.8l1.6 1.9H15v6.3M1 13.6h8.4" fill="none" stroke="currentColor" stroke-width="1.4"/><path d="M10.4 12.6h5.2M13 10v5" stroke="currentColor" stroke-width="1.5" fill="none"/></svg>
<svg class="ic" style="left:22.00px;top:1396.00px;color:#96b0a0;" width="15.70" height="14.70" viewBox="0 0 16 15" preserveAspectRatio="none"><path d="M1 13.6V1.8h4.8l1.6 1.9H15v6.3M1 13.6h8.4" fill="none" stroke="currentColor" stroke-width="1.4"/><path d="M10.4 12.6h5.2M13 10v5" stroke="currentColor" stroke-width="1.5" fill="none"/></svg>
<svg class="ic" style="left:40.00px;top:149.90px;color:#e040c0;" width="15.40" height="13.10" viewBox="0 0 15 13" preserveAspectRatio="none"><path d="M0 0H15V13H0Z" fill="currentColor"/><path d="M2.2 0h2.4v9.6H2.2zM8.4 0h2.6v9.6H8.4z" fill="#1e2428"/></svg>
<svg class="ic" style="left:58.90px;top:180.70px;color:#30e0b0;" width="12.00" height="16.00" viewBox="0 0 12 16" preserveAspectRatio="none"><path d="M0 0H8.2L12 3.8V16H0Z" fill="currentColor"/><path d="M8.6 0.6V3.4H11.4Z" fill="#1a2026" opacity=".5"/><path d="M3.7 0.5v11" stroke="#1a5a50" stroke-width="2.2" stroke-dasharray="1.2 1.2" fill="none"/><rect x="2.6" y="11.5" width="2.4" height="3" fill="#1a2026" opacity=".8"/></svg>
<svg class="ic" style="left:59.00px;top:357.90px;color:#8a8ad0;" width="12.00" height="15.40" viewBox="0 0 12 15.5" preserveAspectRatio="none"><ellipse cx="3.6" cy="12.6" rx="3.4" ry="2.7" fill="currentColor"/><path d="M5.6 12.6V0.3h1.5Q11 3.5 11.8 8.6Q10 5 7.1 4.4V12.6Z" fill="currentColor"/></svg>
<svg class="ic" style="left:56.60px;top:406.70px;color:#a020b8;" width="17.10" height="18.00" viewBox="0 0 17 18" preserveAspectRatio="none"><path d="M0.6 0.2C3.2 0 4.8 2.4 6.2 7.2C7.6 12 10.2 16.6 17 18H0.6Z" fill="currentColor"/></svg>
<svg class="ic" style="left:58.30px;top:452.00px;color:#d02888;" width="15.40" height="18.00" viewBox="0 0 15.4 18" preserveAspectRatio="none"><path d="M0 4.6Q7.7 -0.4 15.4 4.6Z" fill="currentColor"/><ellipse cx="7.7" cy="1.6" rx="1.8" ry="1.2" fill="currentColor"/><path d="M7.7 3.6V13.8" stroke="currentColor" stroke-width="2" fill="none"/><path d="M7.7 12.6Q6.6 15.4 3.4 17.6M7.7 12.6Q8.8 15.4 12 17.6" stroke="currentColor" stroke-width="1.7" fill="none"/></svg>
<svg class="ic" style="left:54.90px;top:499.00px;color:#94d498;" width="20.50" height="17.70" viewBox="0 0 20.5 17.7" preserveAspectRatio="none"><path d="M5 0.2H9Q11.6 0.2 11.6 8.85Q11.6 17.5 9 17.5H5Q0 17.5 0 8.85Q0 0.2 5 0.2Z" fill="currentColor"/><path d="M4.8 2.4Q2.2 2.4 2.2 8.85Q2.2 15.3 4.8 15.3H6.4V2.4Z" fill="#c4c8c0"/><path d="M8.6 1V16.7" stroke="#1a2026" stroke-width=".9" opacity=".55" fill="none"/><path d="M9.4 17.4L15.4 12" stroke="currentColor" stroke-width="1.4" fill="none"/><path d="M13.2 9.6L17.4 5.6L20.4 8.8L16.2 12.8Z" fill="currentColor"/></svg>
<svg class="ic" style="left:72.90px;top:542.40px;color:#5ee070;" width="20.50" height="18.00" viewBox="0 0 20.5 17.7" preserveAspectRatio="none"><path d="M5 0.2H9Q11.6 0.2 11.6 8.85Q11.6 17.5 9 17.5H5Q0 17.5 0 8.85Q0 0.2 5 0.2Z" fill="currentColor"/><path d="M4.8 2.4Q2.2 2.4 2.2 8.85Q2.2 15.3 4.8 15.3H6.4V2.4Z" fill="#c4c8c0"/><path d="M8.6 1V16.7" stroke="#1a2026" stroke-width=".9" opacity=".55" fill="none"/><path d="M9.4 17.4L15.4 12" stroke="currentColor" stroke-width="1.4" fill="none"/><path d="M13.2 9.6L17.4 5.6L20.4 8.8L16.2 12.8Z" fill="currentColor"/></svg>
<svg class="ic" style="left:57.00px;top:572.40px;color:#e07020;" width="17.60" height="20.30" viewBox="0 0 17.6 20.3" preserveAspectRatio="none"><path d="M5 1.6Q5 0.8 6 0.8H11.6Q12.6 0.8 12.6 1.6Q13.4 9 17 15.6Q17.6 17.2 16.4 17.2H1.2Q0 17.2 0.6 15.6Q4.2 9 5 1.6Z" fill="currentColor"/><path d="M6.4 1.2V0H11.2V1.2" stroke="#8a3a10" stroke-width="1.1" fill="none"/><ellipse cx="8.8" cy="18.6" rx="2.3" ry="1.4" fill="currentColor"/></svg>
<svg class="ic" style="left:56.60px;top:619.60px;color:#d01c84;" width="17.10" height="18.00" viewBox="0 0 17 18" preserveAspectRatio="none"><path d="M0.6 0.2C3.2 0 4.8 2.4 6.2 7.2C7.6 12 10.2 16.6 17 18H0.6Z" fill="currentColor"/></svg>
<svg class="ic" style="left:74.20px;top:663.80px;color:#d01c84;" width="17.50" height="17.50" viewBox="0 0 17 18" preserveAspectRatio="none"><path d="M0.6 0.2C3.2 0 4.8 2.4 6.2 7.2C7.6 12 10.2 16.6 17 18H0.6Z" fill="currentColor"/></svg>
<svg class="ic" style="left:57.10px;top:695.00px;color:#ececec;" width="17.50" height="15.40" viewBox="0 0 17.5 15.4" preserveAspectRatio="none"><path d="M2.6 9.5V7.4A6.15 6.15 0 0 1 14.9 7.4V9.5" fill="none" stroke="currentColor" stroke-width="1.9"/><rect x="0.3" y="8.6" width="4.4" height="6.8" rx="2" fill="currentColor"/><rect x="12.8" y="8.6" width="4.4" height="6.8" rx="2" fill="currentColor"/></svg>
<svg class="ic" style="left:60.00px;top:731.90px;color:#c8d040;" width="10.30" height="13.70" viewBox="0 0 10.3 13.7" preserveAspectRatio="none"><rect x="0" y="9.6" width="2.4" height="4.1" fill="currentColor"/><rect x="3.9" y="5.2" width="2.4" height="8.5" fill="currentColor"/><rect x="7.9" y="0" width="2.4" height="13.7" fill="currentColor"/></svg>
<svg class="ic" style="left:58.00px;top:776.40px;color:#f4b030;" width="15.70" height="17.20" viewBox="0 0 15.7 17.2" preserveAspectRatio="none"><path d="M3.6 1.4Q3.6 0 7.85 0Q12.1 0 12.1 1.4V10.2Q15.7 12.2 15.7 14.6Q15.7 17.2 7.85 17.2Q0 17.2 0 14.6Q0 12.2 3.6 10.2Z" fill="currentColor"/><path d="M6.2 3.2V11M9.5 3.2V11" stroke="#1a2026" stroke-width="1" opacity=".55" fill="none"/></svg>
<svg class="ic" style="left:75.40px;top:820.00px;color:#e06818;" width="16.30" height="18.00" viewBox="0 0 15.7 17.2" preserveAspectRatio="none"><path d="M3.6 1.4Q3.6 0 7.85 0Q12.1 0 12.1 1.4V10.2Q15.7 12.2 15.7 14.6Q15.7 17.2 7.85 17.2Q0 17.2 0 14.6Q0 12.2 3.6 10.2Z" fill="currentColor"/><path d="M6.2 3.2V11M9.5 3.2V11" stroke="#1a2026" stroke-width="1" opacity=".55" fill="none"/></svg>
<svg class="ic" style="left:60.00px;top:852.60px;color:#d8d030;" width="10.30" height="13.20" viewBox="0 0 10.3 13.7" preserveAspectRatio="none"><rect x="0" y="9.6" width="2.4" height="4.1" fill="currentColor"/><rect x="3.9" y="5.2" width="2.4" height="8.5" fill="currentColor"/><rect x="7.9" y="0" width="2.4" height="13.7" fill="currentColor"/></svg>
<svg class="ic" style="left:78.00px;top:886.30px;color:#e0e830;" width="10.30" height="13.40" viewBox="0 0 10.3 13.7" preserveAspectRatio="none"><rect x="0" y="9.6" width="2.4" height="4.1" fill="currentColor"/><rect x="3.9" y="5.2" width="2.4" height="8.5" fill="currentColor"/><rect x="7.9" y="0" width="2.4" height="13.7" fill="currentColor"/></svg>
<svg class="ic" style="left:78.00px;top:914.30px;color:#e0e830;" width="10.30" height="13.40" viewBox="0 0 10.3 13.7" preserveAspectRatio="none"><rect x="0" y="9.6" width="2.4" height="4.1" fill="currentColor"/><rect x="3.9" y="5.2" width="2.4" height="8.5" fill="currentColor"/><rect x="7.9" y="0" width="2.4" height="13.7" fill="currentColor"/></svg>
<svg class="ic" style="left:78.00px;top:942.30px;color:#e0e830;" width="10.30" height="13.40" viewBox="0 0 10.3 13.7" preserveAspectRatio="none"><rect x="0" y="9.6" width="2.4" height="4.1" fill="currentColor"/><rect x="3.9" y="5.2" width="2.4" height="8.5" fill="currentColor"/><rect x="7.9" y="0" width="2.4" height="13.7" fill="currentColor"/></svg>
<svg class="ic" style="left:78.00px;top:970.30px;color:#e0e830;" width="10.30" height="13.40" viewBox="0 0 10.3 13.7" preserveAspectRatio="none"><rect x="0" y="9.6" width="2.4" height="4.1" fill="currentColor"/><rect x="3.9" y="5.2" width="2.4" height="8.5" fill="currentColor"/><rect x="7.9" y="0" width="2.4" height="13.7" fill="currentColor"/></svg>
<svg class="ic" style="left:57.40px;top:999.60px;color:#ececec;" width="16.50" height="15.00" viewBox="0 0 17.5 15.4" preserveAspectRatio="none"><path d="M2.6 9.5V7.4A6.15 6.15 0 0 1 14.9 7.4V9.5" fill="none" stroke="currentColor" stroke-width="1.9"/><rect x="0.3" y="8.6" width="4.4" height="6.8" rx="2" fill="currentColor"/><rect x="12.8" y="8.6" width="4.4" height="6.8" rx="2" fill="currentColor"/></svg>
<svg class="ic" style="left:57.40px;top:1035.00px;color:#70e0d8;" width="16.50" height="15.60" viewBox="0 0 17.5 15.4" preserveAspectRatio="none"><path d="M2.6 9.5V7.4A6.15 6.15 0 0 1 14.9 7.4V9.5" fill="none" stroke="currentColor" stroke-width="1.9"/><rect x="0.3" y="8.6" width="4.4" height="6.8" rx="2" fill="currentColor"/><rect x="12.8" y="8.6" width="4.4" height="6.8" rx="2" fill="currentColor"/></svg>
<svg class="ic" style="left:57.40px;top:1071.00px;color:#b0b030;" width="16.50" height="15.40" viewBox="0 0 17.5 15.4" preserveAspectRatio="none"><path d="M2.6 9.5V7.4A6.15 6.15 0 0 1 14.9 7.4V9.5" fill="none" stroke="currentColor" stroke-width="1.9"/><rect x="0.3" y="8.6" width="4.4" height="6.8" rx="2" fill="currentColor"/><rect x="12.8" y="8.6" width="4.4" height="6.8" rx="2" fill="currentColor"/></svg>
<svg class="ic" style="left:55.30px;top:1112.90px;color:#e07420;" width="19.70" height="22.50" viewBox="0 0 19.7 22.5" preserveAspectRatio="none"><path d="M1 0.8L8.6 9.6M18.7 0.8L11.1 9.6" stroke="#c8a030" stroke-width="1.7" fill="none"/><path d="M2 12.4Q2 10.2 9.85 10.2Q17.7 10.2 17.7 12.4V20Q17.7 22.5 9.85 22.5Q2 22.5 2 20Z" fill="#e07420"/><ellipse cx="9.85" cy="12.4" rx="7.85" ry="2" fill="#f0a850"/></svg>
<svg class="ic" style="left:56.80px;top:1166.40px;color:#e040c0;" width="17.10" height="10.70" viewBox="0 0 17 10.7" preserveAspectRatio="none"><path d="M1.2 5.3Q4 1.1 7 1.3Q8.5 2.3 10 1.3Q13 1.1 15.8 5.3Q13 9.5 8.5 9.5Q4 9.5 1.2 5.3Z" fill="none" stroke="currentColor" stroke-width="2.3"/></svg>
<svg class="ic" style="left:73.90px;top:1210.30px;color:#e828b0;" width="17.10" height="10.70" viewBox="0 0 17 10.7" preserveAspectRatio="none"><path d="M1.2 5.3Q4 1.1 7 1.3Q8.5 2.3 10 1.3Q13 1.1 15.8 5.3Q13 9.5 8.5 9.5Q4 9.5 1.2 5.3Z" fill="none" stroke="currentColor" stroke-width="2.3"/></svg>
<svg class="ic" style="left:73.90px;top:1238.00px;color:#e828b0;" width="17.10" height="10.70" viewBox="0 0 17 10.7" preserveAspectRatio="none"><path d="M1.2 5.3Q4 1.1 7 1.3Q8.5 2.3 10 1.3Q13 1.1 15.8 5.3Q13 9.5 8.5 9.5Q4 9.5 1.2 5.3Z" fill="none" stroke="currentColor" stroke-width="2.3"/></svg>
<svg class="ic" style="left:73.90px;top:1266.00px;color:#e828b0;" width="17.10" height="10.70" viewBox="0 0 17 10.7" preserveAspectRatio="none"><path d="M1.2 5.3Q4 1.1 7 1.3Q8.5 2.3 10 1.3Q13 1.1 15.8 5.3Q13 9.5 8.5 9.5Q4 9.5 1.2 5.3Z" fill="none" stroke="currentColor" stroke-width="2.3"/></svg>
<svg class="ic" style="left:57.80px;top:1293.00px;color:#62203a;" width="15.20" height="16.50" viewBox="0 0 15.2 16.5" preserveAspectRatio="none"><path d="M4.2 3.6A6.4 6.4 0 1 0 11.2 3.6" fill="none" stroke="currentColor" stroke-width="1.9"/><path d="M8.6 0.8L11.8 3.6L9.2 6.6" fill="none" stroke="currentColor" stroke-width="1.7"/></svg>
<svg class="ic" style="left:3px;top:70px" width="12" height="7" viewBox="0 0 12 7"><path d="M1 6L6 1.5L11 6" fill="none" stroke="#1e252b" stroke-width="1.6"/></svg>
<svg class="ic" style="left:10.70px;top:14.60px;color:#d2d2d2;" width="5.00" height="8.30" viewBox="0 0 5 8.3" preserveAspectRatio="none"><path d="M0 0L5 4.15L0 8.3Z" fill="currentColor"/></svg>
<svg class="ic" style="left:26.00px;top:12.50px;color:#dedede;" width="9.00" height="13.50" viewBox="0 0 9 13.5" preserveAspectRatio="none"><path d="M4.5 0L9 5.2H6.1V13.5H2.9V5.2H0Z" fill="currentColor"/></svg>
<svg class="ic" style="left:42.90px;top:12.10px;color:#dedede;" width="12.10" height="13.90" viewBox="0 0 12.1 13.9" preserveAspectRatio="none"><path d="M5.2 0.3L0.3 4.8L5.2 9.3V6.4H6.6A2.9 2.9 0 0 1 6.6 12.2H4.6V13.9H6.8A4.6 4.6 0 0 0 6.8 4.7H5.2Z" fill="currentColor"/></svg>
<svg class="ic" style="left:61.00px;top:11.40px;color:#dcdcdc;" width="16.00" height="15.60" viewBox="0 0 16 15.6" preserveAspectRatio="none"><circle cx="7.1" cy="7.1" r="6" stroke="currentColor" stroke-width="1.6" fill="none"/><path d="M11.4 11.3L15.3 15" stroke="currentColor" stroke-width="2.1" fill="none"/><path d="M4.5 9.2L8.8 4.2" stroke="currentColor" stroke-width="1.8" fill="none"/></svg>
<svg class="ic" style="left:194.30px;top:16.80px;color:#6e747a;" width="3.60" height="4.60" viewBox="0 0 5 8.3" preserveAspectRatio="none"><path d="M0 0L5 4.15L0 8.3Z" fill="currentColor"/></svg>
<svg class="ic" style="left:20.70px;top:35.70px;color:#e2e2e2;" width="17.50" height="19.30" viewBox="0 0 17.5 19.3" preserveAspectRatio="none"><path d="M10.3 0C11.6 3.4 15.2 6.2 16.8 10C18.3 13.8 16 17.6 13.2 19.3C14.2 16.4 12.8 13.6 11.6 12.4C11.4 15.2 10.2 17.4 9.2 19.3C8.4 17.2 6.6 15.4 6 12.6C4.8 14.4 4.2 16.4 5.2 19C2 17.4 0 14.6 0.4 11C0.8 8.2 3.2 6.8 4.6 5.8C4.8 8 5.8 9.8 6.8 10.4C6.6 6.8 8 3.2 10.3 0Z" fill="currentColor"/></svg>
<svg class="ic" style="left:74.60px;top:37.10px;color:#e2e2e2;" width="14.40" height="15.80" viewBox="0 0 14.4 15.8" preserveAspectRatio="none"><rect x="0" y="6.4" width="2.3" height="8.8" fill="currentColor"/><path d="M3.6 6.6L6.6 4.4L8.4 0.2Q10.6 0 10.3 3L9.8 6H13.4Q14.4 6.2 14.4 7.6L13.2 14.8Q12.8 15.8 11.2 15.8H3.6Z" fill="currentColor"/></svg>
<svg class="ic" style="left:129.60px;top:36.80px;color:#e2e2e2;" width="12.20" height="16.10" viewBox="0 0 12 15.5" preserveAspectRatio="none"><ellipse cx="3.6" cy="12.6" rx="3.4" ry="2.7" fill="currentColor"/><path d="M5.6 12.6V0.3h1.5Q11 3.5 11.8 8.6Q10 5 7.1 4.4V12.6Z" fill="currentColor"/></svg>
<svg class="ic" style="left:176.80px;top:36.40px;color:#e050c8;" width="22.10" height="17.60" viewBox="0 0 22.1 17.6" preserveAspectRatio="none"><path d="M1.4 8.8Q5 2.2 11 1.3Q17 2.2 20.7 8.8Q17 15.4 11 16.3Q5 15.4 1.4 8.8Z" fill="none" stroke="currentColor" stroke-width="2.5"/><circle cx="11" cy="9" r="4.4" fill="none" stroke="#3f474f" stroke-width="1"/><circle cx="11.4" cy="5.8" r="2.9" fill="#ee80dd"/><circle cx="8.2" cy="11.8" r="1" fill="currentColor"/></svg>
<svg class="ic" style="left:231.10px;top:40.00px;color:#e2e2e2;" width="18.60" height="11.50" viewBox="0 0 17 10.7" preserveAspectRatio="none"><path d="M1.2 5.3Q4 1.1 7 1.3Q8.5 2.3 10 1.3Q13 1.1 15.8 5.3Q13 9.5 8.5 9.5Q4 9.5 1.2 5.3Z" fill="none" stroke="currentColor" stroke-width="2.3"/></svg>
<svg class="ic" style="left:286.40px;top:34.40px;color:#e2e2e2;" width="13.90" height="21.80" viewBox="0 0 13.9 21.8" preserveAspectRatio="none"><path d="M1 17.5V6.9A5.95 5.95 0 0 1 12.9 6.9V17.5" fill="none" stroke="currentColor" stroke-width="1.4"/><rect x="5.1" y="3.8" width="3.7" height="8.4" rx="1.8" fill="none" stroke="currentColor" stroke-width="1.2"/><path d="M4 15.6H9.9L11.8 21.8H2.1Z" fill="currentColor"/></svg>
<svg class="ic" style="left:346.50px;top:16.60px;color:#8d9399;" width="5.50" height="7.20" viewBox="0 0 5 8.3" preserveAspectRatio="none"><path d="M0 0L5 4.15L0 8.3Z" fill="currentColor"/></svg>
<svg class="ic" style="left:367.00px;top:10.00px;color:#3aa874;" width="15.00" height="17.00" viewBox="0 0 15 17" preserveAspectRatio="none"><path d="M2 12V7.5A5.5 5.5 0 0 1 13 7.5V12" fill="none" stroke="currentColor" stroke-width="3.4"/><path d="M0.3 12.5H3.7V17H0.3ZM11.3 12.5H14.7V17H11.3Z" fill="none" stroke="#2f8a5e" stroke-width="1.2"/></svg>
<svg class="ic" style="left:402.00px;top:11.00px;color:#8d9399;" width="16.00" height="17.00" viewBox="0 0 16 17" preserveAspectRatio="none"><path d="M1.2 4.2L4.8 1L15 12.2L14.6 16.2L10.8 15.3Z" fill="none" stroke="currentColor" stroke-width="1.4"/><path d="M2.6 6L6.2 2.6" stroke="currentColor" stroke-width="1" fill="none"/></svg>
<svg class="ic" style="left:427.00px;top:10.00px;color:#5a8ca8;" width="18.00" height="18.00" viewBox="0 0 18 18" preserveAspectRatio="none"><path d="M5.3 0.3L11.2 4.6L6 11.6L0 6.3Z" fill="currentColor"/><path d="M11.6 5L13.4 7.2L8.2 13.6L6.4 12Z" fill="currentColor"/><path d="M10.8 10.8L16.2 16.2" stroke="currentColor" stroke-width="3.2" stroke-linecap="round" fill="none"/><circle cx="16" cy="16" r=".8" fill="#474d53"/><path d="M1 9.8h2.4v7.6H1z" fill="currentColor"/></svg>
<svg class="ic" style="left:454.00px;top:12.00px;color:#8d9399;clip-path:inset(0 0 0 0)" width="13.00" height="15.00" viewBox="0 0 13 15" preserveAspectRatio="none"><circle cx="7" cy="7.5" r="6" fill="none" stroke="currentColor" stroke-width="1.5"/><path d="M2.8 11.7L11.2 3.3" stroke="currentColor" stroke-width="1.5" fill="none"/></svg>
<svg class="ic" style="left:377.00px;top:38.00px;color:#7c8288;" width="22.00" height="17.00" viewBox="0 0 22 17" preserveAspectRatio="none"><path d="M0 8.5L4 6.6L6 4.5L8 5.8L10.5 0.5L12.8 2.2L14.6 5.8L16.6 4.8L22 8.5L16.6 12.2L14.6 11.2L12.8 14.8L10.5 16.5L8 11.2L6 12.5L4 10.4Z" fill="currentColor"/></svg>
<svg class="ic" style="left:410.00px;top:38.00px;color:#d4d8dc;" width="20.00" height="17.00" viewBox="0 0 20 17" preserveAspectRatio="none"><circle cx="3.2" cy="13.8" r="2.3" fill="none" stroke="currentColor" stroke-width="1.4"/><circle cx="16.8" cy="3.2" r="2.3" fill="none" stroke="currentColor" stroke-width="1.4"/><path d="M5 12.4L15 4.6" stroke="currentColor" stroke-width="1.5" fill="none"/></svg>
<svg class="ic" style="left:440.00px;top:40.00px;color:#6c7278;" width="19.00" height="13.00" viewBox="0 0 19 13" preserveAspectRatio="none"><path d="M0 0H3.4V9.2H7.8V0H11.2V9.2H15.6V0H19V13H0Z" fill="currentColor"/></svg>
<div class="r" style="left:406.3px;top:64.8px;width:8px;height:8px;border-radius:50%;border:1px solid #70767c;box-sizing:content-box"></div>
<div class="r" style="left:409px;top:67.5px;width:4.6px;height:4.6px;border-radius:50%;background:#d8dcdf"></div>
<div class="r" style="left:449.5px;top:63.5px;width:10.4px;height:10.4px;border-radius:3px;border:1.3px solid #b4b8bc;box-sizing:content-box"></div>
<div class="dd" style="top:127.0px"></div>
<div class="dd" style="top:155.0px"></div>
<div class="dd" style="top:506.0px"></div>
<div class="dd" style="top:626.5px"></div>
<div class="dd" style="top:783.0px"></div>
<div class="dd" style="top:857.5px"></div>
<div class="dd" style="top:1169.0px"></div>
<div class="r" style="left:47px;top:170px;width:1px;height:1135px;background:#262c32"></div>
<div class="r" style="left:64px;top:538px;width:1px;height:13px;background:#262c32"></div>
<div class="r" style="left:64px;top:658px;width:1px;height:14px;background:#262c32"></div>
<div class="r" style="left:64px;top:815px;width:1px;height:13px;background:#262c32"></div>
<div class="r" style="left:64px;top:879px;width:1px;height:97px;background:#262c32"></div>
<div class="r" style="left:64px;top:1202px;width:1px;height:68px;background:#262c32"></div>
<div class="r" style="left:47px;top:366px;width:9px;height:1px;background:#262c32"></div>
<div class="r" style="left:47px;top:415px;width:9px;height:1px;background:#262c32"></div>
<div class="r" style="left:47px;top:461px;width:9px;height:1px;background:#262c32"></div>
<div class="r" style="left:47px;top:507px;width:7px;height:1px;background:#262c32"></div>
<div class="r" style="left:64px;top:551px;width:8px;height:1px;background:#262c32"></div>
<div class="r" style="left:47px;top:581px;width:9px;height:1px;background:#262c32"></div>
<div class="r" style="left:47px;top:627px;width:9px;height:1px;background:#262c32"></div>
<div class="r" style="left:64px;top:672px;width:9px;height:1px;background:#262c32"></div>
<div class="r" style="left:47px;top:702px;width:9px;height:1px;background:#262c32"></div>
<div class="r" style="left:64px;top:828px;width:10px;height:1px;background:#262c32"></div>
<div class="r" style="left:64px;top:892px;width:13px;height:1px;background:#262c32"></div>
<div class="r" style="left:64px;top:920px;width:13px;height:1px;background:#262c32"></div>
<div class="r" style="left:64px;top:948px;width:13px;height:1px;background:#262c32"></div>
<div class="r" style="left:64px;top:976px;width:13px;height:1px;background:#262c32"></div>
<div class="r" style="left:47px;top:1005px;width:9px;height:1px;background:#262c32"></div>
<div class="r" style="left:47px;top:1041px;width:9px;height:1px;background:#262c32"></div>
<div class="r" style="left:47px;top:1077px;width:9px;height:1px;background:#262c32"></div>
<div class="r" style="left:47px;top:1124px;width:8px;height:1px;background:#262c32"></div>
<div class="r" style="left:47px;top:1170px;width:9px;height:1px;background:#262c32"></div>
<div class="r" style="left:64px;top:1215px;width:9px;height:1px;background:#262c32"></div>
<div class="r" style="left:64px;top:1243px;width:9px;height:1px;background:#262c32"></div>
<div class="r" style="left:64px;top:1270px;width:9px;height:1px;background:#262c32"></div>
<div class="r" style="left:47px;top:1301px;width:10px;height:1px;background:#262c32"></div>
<div class="t" style="left:82.50px;top:12.45px;font-size:12.94px;line-height:12.94px;letter-spacing:0.00px;word-spacing:0.00px;font-weight:400;font-style:normal;color:#c9c9c9;transform:scaleX(1.0467);">Browser - Snap 4</div><div class="t" style="left:384.80px;top:67.48px;font-size:7.70px;line-height:7.70px;letter-spacing:0.00px;word-spacing:0.00px;font-weight:700;font-style:normal;color:#c4c8cc;transform:scaleX(0.9052);">STEP</div><div class="t" style="left:425.20px;top:67.48px;font-size:7.70px;line-height:7.70px;letter-spacing:0.00px;word-spacing:0.00px;font-weight:700;font-style:normal;color:#c4c8cc;transform:scaleX(0.9521);">SLIDE</div>
</body></html>
